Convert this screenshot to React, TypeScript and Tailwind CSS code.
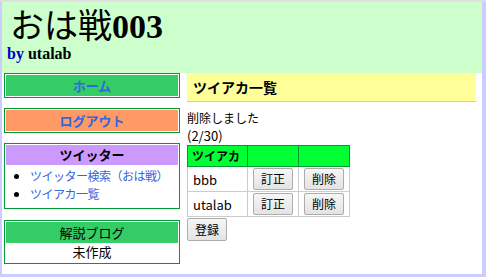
import React from "react";

const jp = { fontFamily: '"Noto Sans CJK JP", "Noto Sans", sans-serif' };

function Btn({ children, w }: { children: React.ReactNode; w: string }) {
  return (
    <button
      className={`${w} h-[22px] border border-[#adadad] rounded-[2px] bg-gradient-to-b from-[#f6f6f6] to-[#e3e3e3] text-[12px] text-black leading-none flex items-center justify-center`}
    >
      {children}
    </button>
  );
}

export default function App() {
  return (
    <div className="w-[486px] h-[277px] bg-[#ccccff] overflow-hidden" style={jp}>
      <div className="h-[2px] bg-[#dedede]" />
      <div className="ml-[2px] mr-[4px] h-[272px] bg-white flex flex-col">
        <div className="h-[71px] bg-[#ccffcc] pl-[8px] pt-[7px]">
          <div
            className="text-[34px] leading-[36px] h-[36px] text-black"
            style={{ fontFamily: '"Liberation Serif", "Noto Sans CJK JP", serif' }}
          >
            おは戦<span className="font-bold">003</span>
          </div>
          <div
            className="text-[16px] font-bold leading-[18px] h-[18px] -ml-[3px] mt-[0px]"
            style={{ fontFamily: '"Liberation Serif", serif' }}
          >
            <span className="text-[#0000cc]">by</span> <span className="text-black">utalab</span>
          </div>
        </div>
        <div className="flex">
          <div className="w-[176px] ml-[2px] flex flex-col gap-[10px]">
            <div className="border border-[#009933] p-[1px]">
              <div className="h-[21px] bg-[#33cc66] flex items-center justify-center text-[13px] font-bold text-[#3366dd]">
                ホーム
              </div>
            </div>
            <div className="border border-[#009933] p-[1px]">
              <div className="h-[21px] bg-[#ff9966] flex items-center justify-center text-[13px] font-bold text-[#3366dd]">
                ログアウト
              </div>
            </div>
            <div className="border border-[#009933] p-[1px] h-[66px]">
              <div className="h-[20px] bg-[#cc99ff] flex items-center justify-center text-[13px] font-bold text-black">
                ツイッター
              </div>
              <ul className="list-disc pl-[24px] mt-[2px] text-[12px] tracking-[-0.5px] text-[#3366dd]">
                <li className="h-[18px] leading-[18px] whitespace-nowrap marker:text-black">ツイッター検索（おは戦）</li>
                <li className="h-[18px] leading-[18px] whitespace-nowrap marker:text-black">ツイアカ一覧</li>
              </ul>
            </div>
            <div className="border border-[#009933] p-[1px] h-[44px] mt-[1px]">
              <div className="h-[21px] bg-[#33cc66] flex items-center justify-center text-[13px] text-black">
                解説ブログ
              </div>
              <div className="text-center text-[13px] h-[18px] leading-[18px] text-black">未作成</div>
            </div>
          </div>
          <div className="ml-[7px] w-[289px] flex flex-col">
            <div className="h-[29px] bg-[#ffff99] border-b border-[#cccccc] flex items-center pl-[6px] text-[14px] font-bold text-black">
              ツイアカ一覧
            </div>
            <div className="mt-[7px] text-[12px] h-[18px] leading-[18px] text-black">削除しました</div>
            <div className="text-[13px] h-[18px] leading-[18px] text-black">(2/30)</div>
            <table className="border-collapse text-[13px] text-black w-[163px]">
              <tbody>
                <tr className="h-[21px] bg-[#00ff33]">
                  <td className="w-[61px] border border-[#009933] font-bold pl-[4px] leading-none text-[12px]">ツイアカ</td>
                  <td className="w-[51px] border border-[#009933]"></td>
                  <td className="w-[51px] border border-[#009933]"></td>
                </tr>
                {["bbb", "utalab"].map((n) => (
                  <tr key={n} className="h-[25px]">
                    <td className="border border-[#cccccc] pl-[5px] leading-none">{n}</td>
                    <td className="border border-[#cccccc] px-[5px]">
                      <Btn w="w-[40px]">訂正</Btn>
                    </td>
                    <td className="border border-[#cccccc] px-[5px]">
                      <Btn w="w-[40px]">削除</Btn>
                    </td>
                  </tr>
                ))}
              </tbody>
            </table>
            <div className="mt-[1px]">
              <Btn w="w-[40px] h-[23px]">登録</Btn>
            </div>
          </div>
        </div>
      </div>
    </div>
  );
}
